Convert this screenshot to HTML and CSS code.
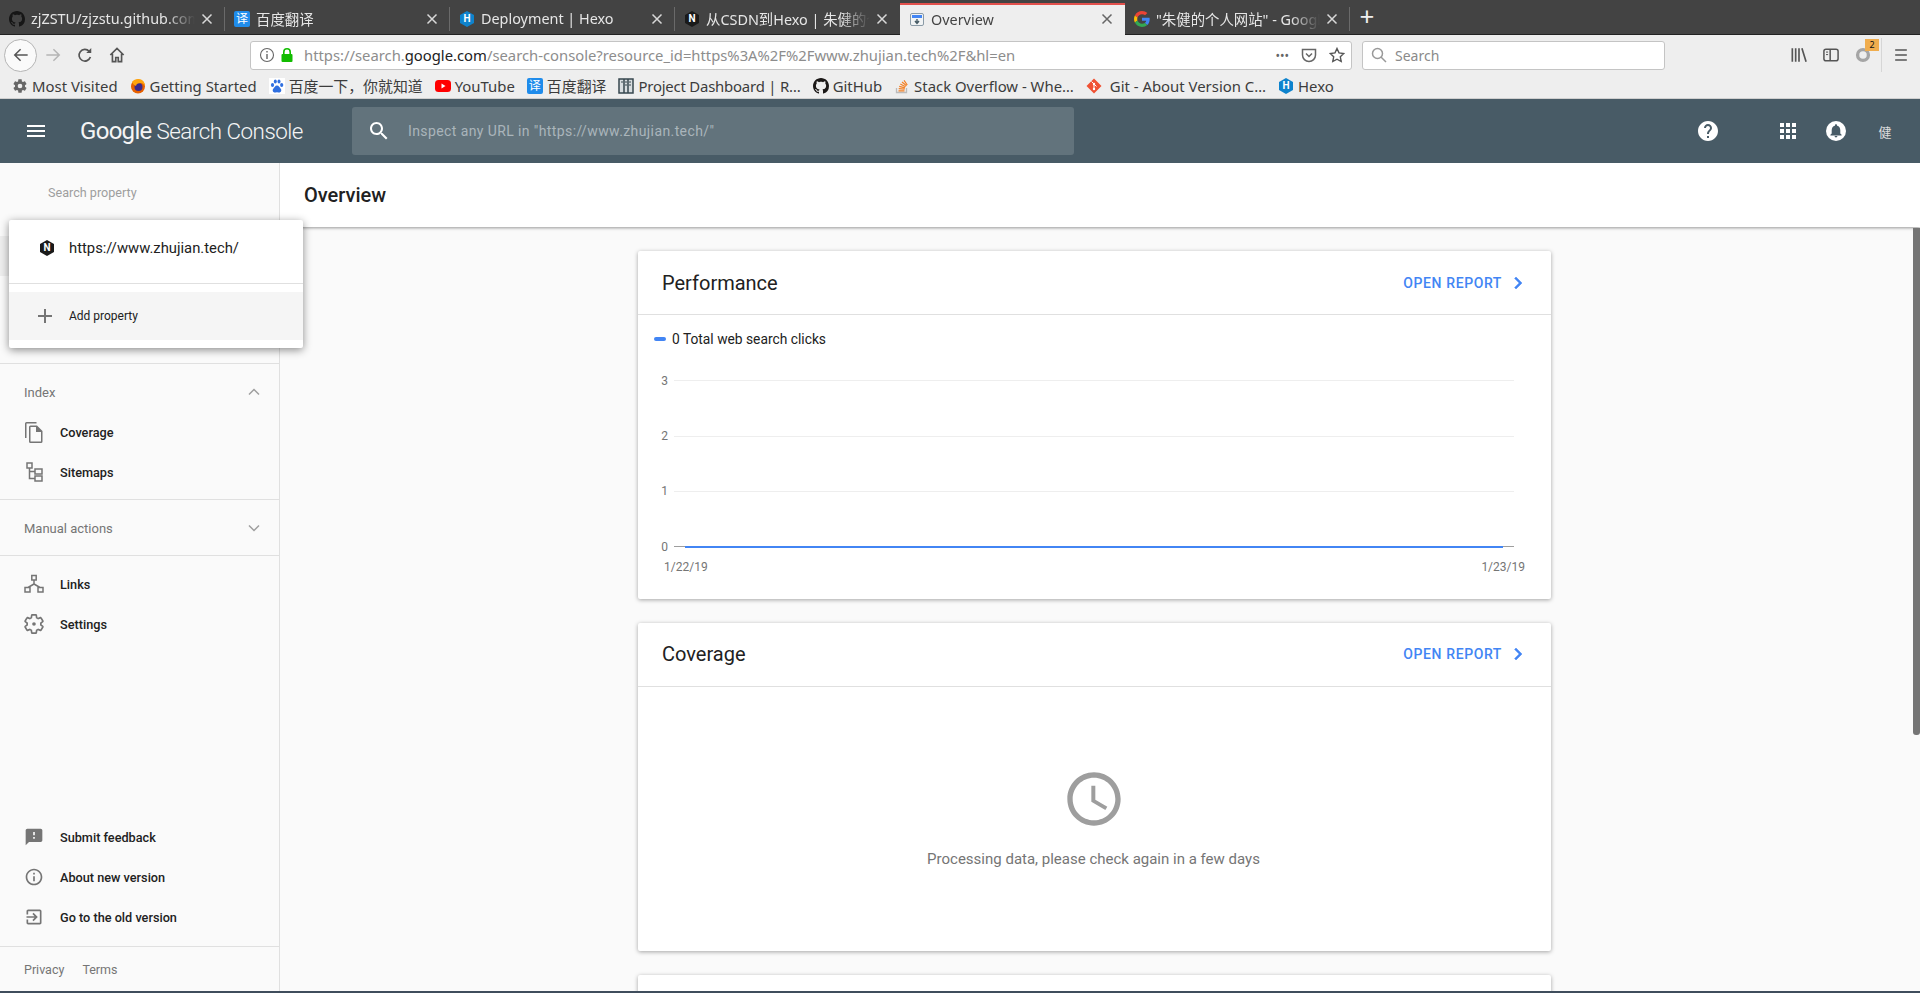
FILE: index.html
```html
<!DOCTYPE html>
<html lang="en">

<head>
    <meta charset="UTF-8">
    <meta name="viewport" content="width=device-width, initial-scale=1.0">
    <link rel="stylesheet" href="styles.css">
    <title>Overview</title>
</head>

<body>
    <svg class="sprite" xmlns="http://www.w3.org/2000/svg">
        <symbol id="i-github" viewBox="0 0 16 16"><path d="M8 0C3.58 0 0 3.58 0 8c0 3.54 2.29 6.53 5.47 7.59.4.07.55-.17.55-.38 0-.19-.01-.82-.01-1.49-2.01.37-2.53-.49-2.69-.94-.09-.23-.48-.94-.82-1.13-.28-.15-.68-.52-.01-.53.63-.01 1.08.58 1.23.82.72 1.21 1.87.87 2.33.66.07-.52.28-.87.51-1.07-1.78-.2-3.64-.89-3.64-3.95 0-.87.31-1.59.82-2.15-.08-.2-.36-1.02.08-2.12 0 0 .67-.21 2.2.82.64-.18 1.32-.27 2-.27.68 0 1.36.09 2 .27 1.53-1.04 2.2-.82 2.2-.82.44 1.1.16 1.92.08 2.12.51.56.82 1.27.82 2.15 0 3.07-1.87 3.75-3.65 3.95.29.25.54.73.54 1.48 0 1.07-.01 1.93-.01 2.2 0 .21.15.46.55.38A8.013 8.013 0 0016 8c0-4.42-3.58-8-8-8z"/></symbol>
        <symbol id="i-hex" viewBox="0 0 16 16"><path d="M8 0l7 4v8l-7 4-7-4V4z"/></symbol>
        <symbol id="i-close" viewBox="0 0 12 12"><path d="M1.5 1.5l9 9M10.5 1.5l-9 9" fill="none" stroke="currentColor" stroke-width="1.5"/></symbol>
        <symbol id="i-menu" viewBox="0 0 24 24"><path d="M3 18h18v-2H3v2zm0-5h18v-2H3v2zm0-7v2h18V6H3z"/></symbol>
        <symbol id="i-search" viewBox="0 0 24 24"><path d="M15.5 14h-.79l-.28-.27C15.41 12.59 16 11.11 16 9.5 16 5.91 13.09 3 9.5 3S3 5.91 3 9.5 5.91 16 9.5 16c1.61 0 3.09-.59 4.23-1.57l.27.28v.79l5 4.99L20.49 19l-4.99-5zm-6 0C7.01 14 5 11.99 5 9.5S7.01 5 9.5 5 14 7.01 14 9.5 11.99 14 9.5 14z"/></symbol>
        <symbol id="i-gear" viewBox="0 0 24 24"><path d="M19.43 12.98c.04-.32.07-.64.07-.98 0-.34-.03-.66-.07-.98l2.11-1.65c.19-.15.24-.42.12-.64l-2-3.46c-.12-.22-.39-.3-.61-.22l-2.49 1c-.52-.4-1.08-.73-1.69-.98l-.38-2.65C14.46 2.18 14.25 2 14 2h-4c-.25 0-.46.18-.49.42l-.38 2.65c-.61.25-1.17.59-1.69.98l-2.49-1c-.23-.09-.49 0-.61.22l-2 3.46c-.13.22-.07.49.12.64l2.11 1.65c-.04.32-.07.65-.07.98 0 .33.03.66.07.98l-2.11 1.65c-.19.15-.24.42-.12.64l2 3.46c.12.22.39.3.61.22l2.49-1c.52.4 1.08.73 1.69.98l.38 2.65c.03.24.24.42.49.42h4c.25 0 .46-.18.49-.42l.38-2.65c.61-.25 1.17-.59 1.69-.98l2.49 1c.23.09.49 0 .61-.22l2-3.46c.12-.22.07-.49-.12-.64l-2.11-1.65z"/></symbol>
        <symbol id="i-chevron-right" viewBox="0 0 24 24"><path d="M10 6L8.59 7.41 13.17 12l-4.58 4.59L10 18l6-6z"/></symbol>
        <symbol id="i-chevron-up" viewBox="0 0 24 24"><path d="M7 14.5l5-5 5 5" fill="none" stroke="currentColor" stroke-width="1.5"/></symbol>
        <symbol id="i-chevron-down" viewBox="0 0 24 24"><path d="M7 9.5l5 5 5-5" fill="none" stroke="currentColor" stroke-width="1.5"/></symbol>
    </svg>

    <div class="tabbar">
        <div class="tab">
            <svg class="favicon icon-light"><use href="#i-github"/></svg>
            <span class="tab-title">zjZSTU/zjzstu.github.com</span>
            <svg class="tab-close"><use href="#i-close"/></svg>
        </div>
        <div class="tab">
            <span class="favicon-yi">译</span>
            <span class="tab-title">百度翻译</span>
            <svg class="tab-close"><use href="#i-close"/></svg>
        </div>
        <div class="tab">
            <span class="favicon-hex"><svg class="hex-bg hex-blue"><use href="#i-hex"/></svg><span class="hex-letter">H</span></span>
            <span class="tab-title">Deployment | Hexo</span>
            <svg class="tab-close"><use href="#i-close"/></svg>
        </div>
        <div class="tab tab-last-plain">
            <span class="favicon-hex"><svg class="hex-bg hex-black"><use href="#i-hex"/></svg><span class="hex-letter">N</span></span>
            <span class="tab-title">从CSDN到Hexo | 朱健的个人网站</span>
            <svg class="tab-close"><use href="#i-close"/></svg>
        </div>
        <div class="tab tab-active">
            <svg class="favicon" viewBox="0 0 16 16">
                <rect x="1.5" y="2.5" width="13" height="12" rx="1.5" fill="#f1f3f4" stroke="#8a9aa6"/>
                <rect x="3" y="4" width="10" height="3" fill="#4285f4"/>
                <path d="M8 8v3.5M6 10l2 2.5 2-2.5" fill="none" stroke="#455a64" stroke-width="1.4"/>
            </svg>
            <span class="tab-title">Overview</span>
            <svg class="tab-close"><use href="#i-close"/></svg>
        </div>
        <div class="tab">
            <svg class="favicon" viewBox="0 0 48 48">
                <path fill="#ea4335" d="M24 9.5c3.5 0 6.7 1.2 9.2 3.6l6.9-6.9C35.9 2.4 30.5 0 24 0 14.6 0 6.5 5.4 2.6 13.2l8 6.2C12.5 13.7 17.8 9.5 24 9.5z"/>
                <path fill="#4285f4" d="M47 24.5c0-1.6-.1-3.1-.4-4.5H24v9h12.9c-.6 3-2.2 5.5-4.7 7.2l7.7 6C44.4 38 47 31.8 47 24.5z"/>
                <path fill="#fbbc05" d="M10.5 28.6c-.5-1.4-.8-3-.8-4.6s.3-3.2.8-4.6l-8-6.2C.9 16.5 0 20.1 0 24s.9 7.5 2.6 10.8l7.9-6.2z"/>
                <path fill="#34a853" d="M24 48c6.5 0 11.9-2.1 15.9-5.8l-7.7-6c-2.2 1.5-4.9 2.3-8.2 2.3-6.2 0-11.5-4.2-13.4-9.9l-8 6.2C6.5 42.6 14.6 48 24 48z"/>
            </svg>
            <span class="tab-title">"朱健的个人网站" - Google 搜索</span>
            <svg class="tab-close"><use href="#i-close"/></svg>
        </div>
        <div class="tab-new">+</div>
    </div>

    <div class="toolbar">
        <div class="back-btn">
            <svg class="tool-icon" viewBox="0 0 24 24"><path d="M20 12H5M11.5 5l-7 7 7 7" fill="none" stroke="#555" stroke-width="1.8"/></svg>
        </div>
        <div class="tool-btn">
            <svg class="tool-icon" viewBox="0 0 24 24"><path d="M4 12h15M12.5 5l7 7-7 7" fill="none" stroke="#b5b5b5" stroke-width="1.8"/></svg>
        </div>
        <div class="tool-btn">
            <svg class="tool-icon" viewBox="0 0 24 24"><path d="M18.5 14.5A7 7 0 1 1 17 7.5" fill="none" stroke="#555" stroke-width="2"/><path d="M19.5 3.5v6h-6z" fill="#555"/></svg>
        </div>
        <div class="tool-btn">
            <svg class="tool-icon" viewBox="0 0 24 24"><path d="M4 12l8-8 8 8M6.5 10.5V20h4v-5h3v5h4v-9.5" fill="none" stroke="#555" stroke-width="2"/></svg>
        </div>

        <div class="urlbar">
            <svg class="url-icon" viewBox="0 0 16 16"><circle cx="8" cy="8" r="6.5" fill="none" stroke="#666" stroke-width="1.1"/><path d="M7.3 4h1.4v1.5H7.3zM7.3 7h1.4v5H7.3z" fill="#666"/></svg>
            <svg class="url-icon lock-icon" viewBox="0 0 16 16"><path d="M4.8 7V5a3.2 3.2 0 0 1 6.4 0v2" fill="none" stroke="#12bc00" stroke-width="1.6"/><rect x="2.5" y="7" width="11" height="8" rx="1" fill="#12bc00"/></svg>
            <span class="url-text">https://search.<b>google.com</b>/search-console?resource_id=https%3A%2F%2Fwww.zhujian.tech%2F&amp;hl=en</span>
            <span class="url-dots">•••</span>
            <svg class="url-icon pocket-icon" viewBox="0 0 16 16"><path d="M1.5 2.5h13V8a6.5 6.5 0 0 1-13 0z" fill="none" stroke="#666" stroke-width="1.5"/><path d="M5 6.5l3 3 3-3" fill="none" stroke="#666" stroke-width="1.5"/></svg>
            <svg class="url-icon star-icon" viewBox="0 0 16 16"><path d="M8 1.5l2 4.4 4.8.6-3.5 3.3.9 4.7L8 12.2l-4.2 2.3.9-4.7L1.2 6.5 6 5.9z" fill="none" stroke="#555" stroke-width="1.4"/></svg>
        </div>

        <div class="searchbar">
            <svg class="url-icon" viewBox="0 0 16 16"><circle cx="6.5" cy="6.5" r="5" fill="none" stroke="#999" stroke-width="1.5"/><path d="M10 10l5 5" stroke="#999" stroke-width="1.5"/></svg>
            <span class="search-text">Search</span>
        </div>

        <div class="tool-right">
            <div class="tool-btn">
                <svg class="tool-icon" viewBox="0 0 24 24"><path d="M4 4v16M8 4v16M12 4v16M15.5 4l5 16" fill="none" stroke="#555" stroke-width="2"/></svg>
            </div>
            <div class="tool-btn">
                <svg class="tool-icon" viewBox="0 0 24 24"><rect x="3.5" y="5" width="17" height="14" rx="2.5" fill="none" stroke="#555" stroke-width="1.8"/><path d="M11 5v14" stroke="#555" stroke-width="1.8"/><path d="M6 8.5h2.5M6 11.5h2.5" stroke="#555" stroke-width="1.2"/></svg>
            </div>
            <div class="tool-btn badge-btn">
                <svg class="tool-icon" viewBox="0 0 24 24"><circle cx="12" cy="12" r="6.5" fill="none" stroke="#a5a5a5" stroke-width="4"/></svg>
                <span class="badge">2</span>
            </div>
            <div class="tool-sep"></div>
            <div class="tool-btn">
                <svg class="tool-icon" viewBox="0 0 24 24"><path d="M5 6h14M5 12h14M5 18h14" stroke="#555" stroke-width="2"/></svg>
            </div>
        </div>
    </div>

    <div class="bookmarks">
        <div class="bookmark">
            <svg class="favicon gear-small" viewBox="0 0 24 24"><use href="#i-gear"/><circle cx="12" cy="12" r="3.5" fill="#eee"/></svg>Most Visited
        </div>
        <div class="bookmark">
            <svg class="favicon" viewBox="0 0 16 16">
                <circle cx="8" cy="8.5" r="7" fill="#e66000"/>
                <circle cx="8.5" cy="9" r="4" fill="#3b2a8c"/>
                <path d="M2 4c2-3 7-4 10-2 2 1.5 3 4 3 6-1-2-3-3-4-3-3 0-5 1-5 3-2-1-3-2-4-4z" fill="#ffa40c"/>
            </svg>Getting Started
        </div>
        <div class="bookmark">
            <svg class="favicon" viewBox="0 0 16 16">
                <rect width="16" height="16" fill="#fff"/>
                <g fill="#2f6fe0"><ellipse cx="3.5" cy="7" rx="1.6" ry="2"/><ellipse cx="6.3" cy="3.5" rx="1.5" ry="2"/><ellipse cx="10" cy="3.5" rx="1.5" ry="2"/><ellipse cx="12.7" cy="7" rx="1.6" ry="2"/><path d="M8 7.5c2 0 2.5 2 3.5 3 1.5 1.5.8 4-1.5 4-1 0-1.3-.3-2-.3s-1 .3-2 .3c-2.3 0-3-2.5-1.5-4 1-1 1.5-3 3.5-3z"/></g>
            </svg>百度一下，你就知道
        </div>
        <div class="bookmark">
            <svg class="favicon" viewBox="0 0 16 16"><rect y="2" width="16" height="12" rx="3.5" fill="#f00"/><path d="M6.5 5.5v5l4-2.5z" fill="#fff"/></svg>YouTube
        </div>
        <div class="bookmark">
            <span class="favicon-yi">译</span>百度翻译
        </div>
        <div class="bookmark bookmark-tight">
            <svg class="favicon" viewBox="0 0 16 16"><rect x="1" y="1" width="14" height="14" fill="#d8dde0" stroke="#37474f" stroke-width="1.5"/><path d="M6 1v14M10 1v14" stroke="#37474f" stroke-width="1.5"/><path d="M7 4h2M7 7h2M11 4h2M11 7h2M3 4h2" stroke="#37474f"/></svg>Project Dashboard | R…
        </div>
        <div class="bookmark">
            <svg class="favicon icon-dark"><use href="#i-github"/></svg>GitHub
        </div>
        <div class="bookmark">
            <svg class="favicon" viewBox="0 0 16 16"><path d="M2.5 10v4.5h10V10" fill="none" stroke="#bcbbbb" stroke-width="1.3"/><path d="M4.5 12.8h6M4.7 10.6l6 .6M5.2 8.3l5.8 1.5M6.3 6l5.3 2.7M8 4l4.5 3.8M10 2.3l3.3 4.7" stroke="#f48024" stroke-width="1.2"/></svg>Stack Overflow - Whe…
        </div>
        <div class="bookmark bookmark-wide">
            <svg class="favicon" viewBox="0 0 16 16"><path d="M8 .5L15.5 8 8 15.5.5 8z" fill="#f05133"/><path d="M5.5 3.5l5 5M8 6v5" stroke="#fff"/><circle cx="8" cy="6" r="1.2" fill="#fff"/><circle cx="8" cy="11" r="1.2" fill="#fff"/></svg>Git - About Version C…
        </div>
        <div class="bookmark">
            <span class="favicon-hex"><svg class="hex-bg hex-blue"><use href="#i-hex"/></svg><span class="hex-letter">H</span></span>Hexo
        </div>
    </div>

    <header class="app-header">
        <svg class="header-menu"><use href="#i-menu"/></svg>
        <div class="logo"><span class="logo-google">Google</span> Search Console</div>
        <div class="inspect-box">
            <svg class="inspect-icon"><use href="#i-search"/></svg>
            <span class="inspect-text">Inspect any URL in "https://www.zhujian.tech/"</span>
        </div>
        <div class="header-right">
            <svg class="header-icon help-icon" viewBox="0 0 24 24"><path d="M12 2C6.48 2 2 6.48 2 12s4.48 10 10 10 10-4.48 10-10S17.52 2 12 2zm1 17h-2v-2h2v2zm2.07-7.75l-.9.92C13.45 12.9 13 13.5 13 15h-2v-.5c0-1.1.45-2.1 1.17-2.83l1.24-1.26c.37-.36.59-.86.59-1.41 0-1.1-.9-2-2-2s-2 .9-2 2H8c0-2.21 1.79-4 4-4s4 1.79 4 4c0 .88-.36 1.68-.93 2.25z"/></svg>
            <svg class="header-icon apps-icon" viewBox="0 0 24 24"><path d="M4 8h4V4H4v4zm6 12h4v-4h-4v4zm-6 0h4v-4H4v4zm0-6h4v-4H4v4zm6 0h4v-4h-4v4zm6-10v4h4V4h-4zm-6 4h4V4h-4v4zm6 6h4v-4h-4v4zm0 6h4v-4h-4v4z"/></svg>
            <svg class="header-icon bell-icon" viewBox="0 0 24 24"><circle cx="12" cy="12" r="10"/><path fill="#485b66" d="M12 18.5c.8 0 1.4-.6 1.4-1.4h-2.8c0 .8.6 1.4 1.4 1.4zm4.3-4v-3.3c0-2.1-1.1-3.9-3.2-4.4v-.5c0-.6-.5-1.1-1.1-1.1s-1.1.5-1.1 1.1v.5c-2.1.5-3.2 2.3-3.2 4.4v3.3l-1.3 1.3v.6h11.2v-.6l-1.3-1.3z"/></svg>
            <span class="avatar">健</span>
        </div>
    </header>

    <div class="app-body">
        <aside class="sidebar">
            <div class="search-property">Search property</div>
            <div class="nav-selected"></div>

            <div class="nav-group">
                <div class="nav-title nav-title-open">Index<svg class="nav-chevron"><use href="#i-chevron-up"/></svg></div>
                <div class="nav-item">
                    <svg class="nav-icon nav-icon-full" viewBox="0 0 24 24"><path d="M14.5 2H4.5A1.5 1.5 0 0 0 3 3.5V18h1.5V3.5h10zM15 5.5H8.5A1.5 1.5 0 0 0 7 7v14.5A1.5 1.5 0 0 0 8.5 23H19a1.5 1.5 0 0 0 1.5-1.5V11zM8.5 21.5V7h5.5v5h5v9.5z"/></svg>
                    Coverage
                </div>
                <div class="nav-item">
                    <svg class="nav-icon nav-icon-full nav-stroke" viewBox="0 0 24 24"><path d="M5 3h5v5H5zM13 9h7v5h-7zM13 16h7v5h-7zM7.5 8v10.5H13M7.5 11.5H13"/></svg>
                    Sitemaps
                </div>
            </div>

            <div class="nav-group nav-group-closed">
                <div class="nav-title">Manual actions<svg class="nav-chevron"><use href="#i-chevron-down"/></svg></div>
            </div>

            <div class="nav-group nav-group-plain">
                <div class="nav-item">
                    <svg class="nav-icon nav-icon-full nav-stroke" viewBox="0 0 24 24"><path d="M9.8 3.5h4.4v4.5H9.8zM3 15.5h5v4.5H3zM16 15.5h5v4.5h-5zM12 8v4M12 12l-6 3.5M12 12l6 3.5"/></svg>
                    Links
                </div>
                <div class="nav-item">
                    <svg class="nav-icon nav-gear" viewBox="0 0 24 24"><use href="#i-gear"/><circle cx="12" cy="12" r="2" fill="#757575" stroke="none"/></svg>
                    Settings
                </div>
            </div>

            <div class="nav-footer">
                <div class="nav-item">
                    <svg class="nav-icon" viewBox="0 0 24 24"><path d="M20 2H4c-1.1 0-1.99.9-1.99 2L2 22l4-4h14c1.1 0 2-.9 2-2V4c0-1.1-.9-2-2-2zm-7 12h-2v-2h2v2zm0-4h-2V6h2v4z"/></svg>
                    Submit feedback
                </div>
                <div class="nav-item">
                    <svg class="nav-icon" viewBox="0 0 24 24"><path d="M11 7h2v2h-2zm0 4h2v6h-2zm1-9C6.48 2 2 6.48 2 12s4.48 10 10 10 10-4.48 10-10S17.52 2 12 2zm0 18c-4.41 0-8-3.59-8-8s3.59-8 8-8 8 3.59 8 8-3.59 8-8 8z"/></svg>
                    About new version
                </div>
                <div class="nav-item">
                    <svg class="nav-icon" viewBox="0 0 24 24"><path d="M10.09 15.59L11.5 17l5-5-5-5-1.41 1.41L12.67 11H3v2h9.67l-2.58 2.59zM19 3H5c-1.11 0-2 .9-2 2v4h2V5h14v14H5v-4H3v4c0 1.1.89 2 2 2h14c1.1 0 2-.9 2-2V5c0-1.1-.9-2-2-2z"/></svg>
                    Go to the old version
                </div>
            </div>

            <div class="nav-legal">
                <span>Privacy</span>
                <span>Terms</span>
            </div>
        </aside>

        <main class="main">
            <div class="page-title">Overview</div>
            <div class="content">
                <section class="card">
                    <div class="card-header">
                        <h2>Performance</h2>
                        <a class="open-report">OPEN REPORT<svg class="open-chevron"><use href="#i-chevron-right"/></svg></a>
                    </div>
                    <div class="legend"><span class="legend-dash"></span>0 Total web search clicks</div>
                    <div class="chart">
                        <div class="chart-row"><span class="chart-label">3</span><span class="chart-line"></span></div>
                        <div class="chart-row"><span class="chart-label">2</span><span class="chart-line"></span></div>
                        <div class="chart-row"><span class="chart-label">1</span><span class="chart-line"></span></div>
                        <div class="chart-row"><span class="chart-label">0</span><span class="chart-line chart-axis"><span class="chart-data"></span></span></div>
                    </div>
                    <div class="chart-dates"><span>1/22/19</span><span>1/23/19</span></div>
                </section>

                <section class="card">
                    <div class="card-header">
                        <h2>Coverage</h2>
                        <a class="open-report">OPEN REPORT<svg class="open-chevron"><use href="#i-chevron-right"/></svg></a>
                    </div>
                    <div class="processing">
                        <svg class="clock" viewBox="0 0 24 24"><path d="M11.99 2C6.47 2 2 6.48 2 12s4.47 10 9.99 10C17.52 22 22 17.52 22 12S17.52 2 11.99 2zM12 20c-4.42 0-8-3.58-8-8s3.58-8 8-8 8 3.58 8 8-3.58 8-8 8zm.5-13H11v6l5.25 3.15.75-1.23-4.5-2.67z"/></svg>
                        <p>Processing data, please check again in a few days</p>
                    </div>
                </section>

                <section class="card card-cut"></section>
            </div>
            <div class="scrollbar-thumb"></div>
        </main>

        <div class="property-popup">
            <div class="property-row">
                <span class="favicon-hex"><svg class="hex-bg hex-black"><use href="#i-hex"/></svg><span class="hex-letter">N</span></span>
                https://www.zhujian.tech/
            </div>
            <div class="add-row">
                <svg class="add-icon" viewBox="0 0 24 24"><path d="M19 13h-6v6h-2v-6H5v-2h6V5h2v6h6v2z"/></svg>
                Add property
            </div>
        </div>
    </div>
    <div class="bottom-line"></div>
</body>

</html>
```

FILE: styles.css
```css
* {
    box-sizing: border-box;
}

html,
body {
    height: 100%;
}

body {
    margin: 0;
    display: flex;
    flex-direction: column;
    height: 100vh;
    overflow: hidden;
    font-family: 'Roboto', 'Noto Sans CJK SC', sans-serif;
    background-color: #fafafa;
    color: #212121;
}

.sprite {
    display: none;
}

/* browser chrome */
.tabbar {
    display: flex;
    align-items: flex-end;
    height: 35px;
    flex-shrink: 0;
    background-color: #434343;
    border-bottom: 1px solid #222;
    font-family: 'Noto Sans', 'Noto Sans CJK SC', sans-serif;
}

.tab {
    position: relative;
    display: flex;
    align-items: center;
    width: 225px;
    height: 31px;
    padding: 0 12px 0 9px;
    color: #e6e6e6;
    font-size: 14.4px;
}

.tab::after {
    content: '';
    position: absolute;
    right: 0;
    top: 4px;
    height: 24px;
    width: 1px;
    background-color: #6a6a6a;
}

.tab-last-plain::after,
.tab-active::after {
    display: none;
}

.tab-active {
    height: 32px;
    margin-bottom: -1px;
    padding-bottom: 2px;
    background-color: #eeeeee;
    border-top: 2px solid #e2504c;
    color: #444;
}

.tab-title {
    flex: 1;
    min-width: 0;
    margin-left: 6px;
    overflow: hidden;
    white-space: nowrap;
    -webkit-mask-image: linear-gradient(to right, #000 82%, transparent 100%);
    mask-image: linear-gradient(to right, #000 82%, transparent 100%);
}

.tab-close {
    width: 12px;
    height: 12px;
    flex-shrink: 0;
    margin-left: 6px;
    color: #d8d8d8;
}

.tab-active .tab-close {
    color: #666;
}

.tab-new {
    width: 32px;
    height: 34px;
    margin-left: 1px;
    text-align: center;
    color: #eee;
    font-size: 26px;
    line-height: 32px;
}

.favicon {
    width: 16px;
    height: 16px;
    flex-shrink: 0;
}

.icon-light {
    fill: #161616;
}

.icon-dark {
    fill: #1b1817;
}

.favicon-yi {
    display: inline-block;
    width: 16px;
    height: 16px;
    flex-shrink: 0;
    border-radius: 2px;
    background-color: #1f8ceb;
    color: #fff;
    font-size: 12px;
    line-height: 16px;
    text-align: center;
}

.favicon-hex {
    position: relative;
    display: inline-block;
    width: 16px;
    height: 16px;
    flex-shrink: 0;
    text-align: center;
}

.hex-bg {
    position: absolute;
    left: 0;
    top: 0;
    width: 16px;
    height: 16px;
}

.hex-blue {
    fill: #0e83cd;
}

.hex-black {
    fill: #1a1a1a;
}

.hex-letter {
    position: relative;
    display: block;
    color: #fff;
    font-family: 'Roboto', sans-serif;
    font-size: 10px;
    font-weight: 700;
    line-height: 16px;
}

.toolbar {
    display: flex;
    align-items: center;
    height: 40px;
    flex-shrink: 0;
    padding: 0 3px 0 4px;
    background-color: #eeeeee;
}

.back-btn {
    display: flex;
    align-items: center;
    justify-content: center;
    width: 33px;
    height: 33px;
    border: 1px solid #b5b5b5;
    border-radius: 50%;
    background-color: #fafafa;
}

.tool-btn {
    position: relative;
    display: flex;
    align-items: center;
    justify-content: center;
    width: 32px;
    height: 32px;
}

.tool-icon {
    width: 20px;
    height: 20px;
}

.urlbar,
.searchbar {
    display: flex;
    align-items: center;
    height: 29px;
    background-color: #fff;
    border: 1px solid #c4c4c4;
    border-radius: 3px;
    font-family: 'Noto Sans', sans-serif;
    font-size: 14px;
}

.urlbar {
    width: 1102px;
    margin-left: 117px;
    padding-left: 8px;
    font-size: 14.8px;
}

.url-icon {
    width: 16px;
    height: 16px;
    flex-shrink: 0;
}

.lock-icon {
    margin-left: 4px;
}

.url-text {
    flex: 1;
    margin-left: 9px;
    color: #8d8d8d;
    white-space: nowrap;
}

.url-text b {
    font-weight: 400;
    color: #222;
}

.url-dots {
    margin-right: 12px;
    color: #666;
    font-size: 12px;
}

.pocket-icon {
    margin-right: 12px;
}

.star-icon {
    margin-right: 6px;
}

.searchbar {
    width: 303px;
    margin-left: 10px;
    padding-left: 8px;
}

.search-text {
    margin-left: 8px;
    color: #8a8a8a;
}

.tool-right {
    display: flex;
    align-items: center;
    margin-left: auto;
}

.badge {
    position: absolute;
    right: 0;
    top: 0;
    width: 14px;
    height: 12px;
    background-color: #f0ad4e;
    color: #111;
    font-family: 'Noto Sans', sans-serif;
    font-size: 9px;
    line-height: 12px;
    text-align: center;
}

.tool-sep {
    width: 1px;
    height: 34px;
    margin: 0 3px 0 2px;
    background-color: #d6d6d6;
}

.bookmarks {
    display: flex;
    align-items: center;
    gap: 12px;
    height: 24px;
    flex-shrink: 0;
    padding: 0 0 2px 12px;
    background-color: #eeeeee;
    border-bottom: 1px solid #cfcfcf;
    font-family: 'Noto Sans', 'Noto Sans CJK SC', sans-serif;
    font-size: 14.9px;
    color: #3c3c3c;
}

.bookmark {
    display: flex;
    align-items: center;
    gap: 4px;
    white-space: nowrap;
}

.bookmark-tight {
    letter-spacing: -0.2px;
}

.bookmark-wide {
    gap: 8px;
}

.gear-small {
    fill: #666;
}

/* search console header */
.app-header {
    position: relative;
    z-index: 3;
    display: flex;
    align-items: center;
    height: 64px;
    flex-shrink: 0;
    background-color: #485b66;
}

.header-menu {
    width: 24px;
    height: 24px;
    margin-left: 24px;
    fill: #fff;
    flex-shrink: 0;
}

.logo {
    width: 304px;
    padding-left: 32px;
    flex-shrink: 0;
    color: #f5f5f5;
    font-size: 22.4px;
    font-weight: 300;
    letter-spacing: -0.5px;
    white-space: nowrap;
}

.logo-google {
    font-size: 24px;
    font-weight: 400;
    letter-spacing: -0.7px;
}

.inspect-box {
    display: flex;
    align-items: center;
    width: 722px;
    height: 48px;
    padding-left: 15px;
    border-radius: 3px;
    background-color: #62737c;
}

.inspect-icon {
    width: 24px;
    height: 24px;
    fill: #fff;
}

.inspect-text {
    margin-left: 17px;
    color: #aab5bb;
    font-size: 14px;
    letter-spacing: 0.4px;
}

.header-right {
    display: flex;
    align-items: center;
    margin-left: auto;
}

.header-icon {
    width: 24px;
    height: 24px;
    fill: #fff;
}

.apps-icon {
    margin-left: 56px;
}

.bell-icon {
    margin-left: 24px;
}

.avatar {
    width: 24px;
    margin: 0 23px 0 25px;
    color: #ddd;
    font-size: 13px;
    text-align: center;
}

/* sidebar and content */
.app-body {
    position: relative;
    display: flex;
    flex: 1;
    min-height: 0;
}

.sidebar {
    display: flex;
    flex-direction: column;
    width: 280px;
    flex-shrink: 0;
    background-color: #fafafa;
    border-right: 1px solid #e0e0e0;
}

.search-property {
    height: 58px;
    padding: 1px 0 0 48px;
    color: #9e9e9e;
    font-size: 12.6px;
    line-height: 58px;
}

.nav-selected {
    height: 40px;
    margin: 15px 8px 87px 0;
    background-color: #eeeeee;
}

.nav-group {
    border-top: 1px solid #e0e0e0;
    padding-bottom: 7px;
}

.nav-group-closed {
    padding-bottom: 0;
}

.nav-group-plain {
    padding-top: 8px;
}

.nav-title {
    display: flex;
    align-items: center;
    justify-content: space-between;
    height: 55px;
    padding: 1px 13px 0 24px;
    color: #757575;
    font-size: 13px;
}

.nav-title-open {
    height: 48px;
    padding-top: 8px;
}

.nav-chevron {
    width: 24px;
    height: 24px;
    color: #9e9e9e;
}

.nav-item {
    display: flex;
    align-items: center;
    height: 40px;
    padding-left: 22px;
    font-size: 12.7px;
    font-weight: 500;
    color: #212121;
}

.nav-icon {
    width: 20px;
    height: 20px;
    margin: 0 16px 0 2px;
    fill: #757575;
    flex-shrink: 0;
}

.nav-icon-full {
    width: 24px;
    height: 24px;
    margin: 0 14px 0 0;
}

.nav-stroke {
    fill: none;
    stroke: #757575;
    stroke-width: 1.5;
}

.nav-gear {
    width: 22px;
    height: 22px;
    margin: 0 15px 0 1px;
    fill: none;
    stroke: #757575;
    stroke-width: 1.8;
}

.nav-footer {
    margin-top: auto;
    padding-bottom: 9px;
}

.nav-legal {
    display: flex;
    gap: 18px;
    align-items: center;
    height: 45px;
    padding-left: 24px;
    border-top: 1px solid #e0e0e0;
    color: #757575;
    font-size: 12.5px;
}

.main {
    position: relative;
    flex: 1;
    min-width: 0;
    display: flex;
    flex-direction: column;
    overflow: hidden;
}

.page-title {
    position: relative;
    z-index: 1;
    display: flex;
    align-items: center;
    height: 64px;
    flex-shrink: 0;
    padding-left: 24px;
    background-color: #fff;
    box-shadow: 0 1px 3px rgba(0, 0, 0, 0.4);
    font-size: 20px;
    font-weight: 500;
}

.content {
    display: flex;
    flex-direction: column;
    gap: 24px;
    padding: 24px 0 0 358px;
}

.card {
    width: 913px;
    flex-shrink: 0;
    background-color: #fff;
    border-radius: 2px;
    box-shadow: 0 1px 4px rgba(0, 0, 0, 0.35);
}

.card-cut {
    height: 60px;
}

.card-header {
    display: flex;
    align-items: center;
    justify-content: space-between;
    height: 64px;
    padding: 0 24px;
    border-bottom: 1px solid #e0e0e0;
}

.card-header h2 {
    margin: 0;
    font-size: 20px;
    font-weight: 400;
}

.open-report {
    display: flex;
    align-items: center;
    color: #4285f4;
    font-size: 14px;
    font-weight: 500;
    letter-spacing: 0.6px;
}

.open-chevron {
    width: 24px;
    height: 24px;
    margin: 0 -3px 0 4px;
    fill: #4285f4;
    stroke: #4285f4;
    stroke-width: 0.5;
}

.legend {
    display: flex;
    align-items: center;
    padding: 14px 0 4px 16px;
    font-size: 13.8px;
    line-height: 20px;
}

.legend-dash {
    width: 12px;
    height: 4px;
    margin-right: 6px;
    border-radius: 2px;
    background-color: #4285f4;
}

.chart-row {
    display: flex;
    align-items: center;
    height: 55.4px;
    padding-right: 37px;
    font-size: 12px;
    color: #757575;
}

.chart-label {
    width: 30px;
    margin-right: 6px;
    text-align: right;
}

.chart-line {
    flex: 1;
    height: 1px;
    background-color: #eeeeee;
}

.chart-axis {
    display: flex;
    align-items: center;
    background-color: #9e9e9e;
}

.chart-data {
    flex: 1;
    height: 2px;
    margin: 0 11px;
    background-color: #4285f4;
}

.chart-dates {
    display: flex;
    justify-content: space-between;
    height: 39px;
    margin-top: -14.6px;
    padding: 0 26px;
    font-size: 12px;
    color: #757575;
}

.processing {
    display: flex;
    flex-direction: column;
    align-items: center;
    height: 264px;
    padding: 80px 2px 0 0;
}

.clock {
    width: 64px;
    height: 64px;
    fill: #9e9e9e;
}

.processing p {
    margin: 19px 0 0;
    color: #757575;
    font-size: 15px;
}

.scrollbar-thumb {
    position: absolute;
    right: 0;
    top: 65px;
    z-index: 2;
    width: 7px;
    height: 507px;
    border-radius: 0 0 3px 3px;
    background-color: #757575;
}

.property-popup {
    position: absolute;
    left: 9px;
    top: 57px;
    z-index: 4;
    width: 294px;
    height: 128px;
    padding-bottom: 8px;
    background-color: #fff;
    border-radius: 2px;
    box-shadow: 0 2px 8px rgba(0, 0, 0, 0.45);
}

.property-row {
    display: flex;
    align-items: center;
    gap: 14px;
    height: 64px;
    padding: 0 0 8px 30px;
    border-bottom: 1px solid #e0e0e0;
    font-size: 14.8px;
}

.add-row {
    display: flex;
    align-items: center;
    height: 48px;
    margin-top: 8px;
    padding-left: 24px;
    background-color: #f5f5f5;
    font-size: 12px;
}

.add-icon {
    width: 24px;
    height: 24px;
    margin-right: 12px;
    fill: #757575;
}

.bottom-line {
    height: 2px;
    flex-shrink: 0;
    background-color: #3f4d5c;
}
```
